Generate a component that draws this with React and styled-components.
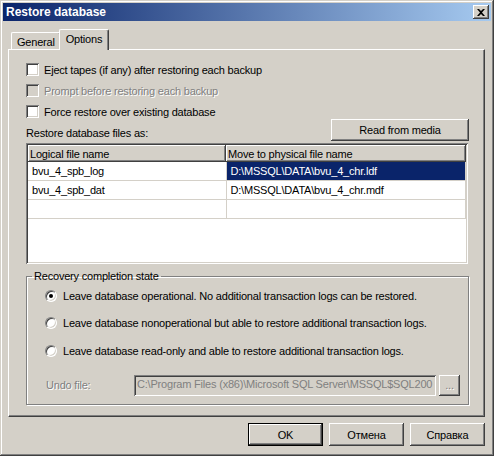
import React from 'react'
import styled, { createGlobalStyle } from 'styled-components'

const Global = createGlobalStyle`
	html, body {
		margin: 0;
		padding: 0;
		background: #d4d0c8;
	}
	body {
		font-family: "Liberation Sans", Tahoma, Arial, sans-serif;
		font-size: 11px;
		letter-spacing: -0.2px;
		color: #000;
	}
`

const raised = `
	box-shadow: inset -1px -1px #404040, inset 1px 1px #fff, inset -2px -2px #808080, inset 2px 2px #d4d0c8;
`
const sunken = `
	box-shadow: inset 1px 1px #808080, inset -1px -1px #fff, inset 2px 2px #404040, inset -2px -2px #d4d0c8;
`

const Window = styled.div`
	width: 494px;
	height: 456px;
	box-sizing: border-box;
	padding: 3px;
	background: #d4d0c8;
	box-shadow: inset -1px -1px #404040, inset 1px 1px #d4d0c8, inset -2px -2px #808080, inset 2px 2px #fff;
	display: flex;
	flex-direction: column;
`

const TitleBar = styled.div`
	height: 18px;
	display: flex;
	align-items: center;
	justify-content: space-between;
	padding: 0 2px 0 3px;
	background: linear-gradient(to right, #0a246a, #a6caf0);
	color: #fff;
	font-weight: bold;
	font-size: 12px;
	letter-spacing: 0;
`

const CloseButton = styled.div`
	width: 16px;
	height: 14px;
	background: #d4d0c8;
	${raised}
	display: flex;
	align-items: center;
	justify-content: center;
`

const Content = styled.div`
	padding: 0 6px 0 5px;
	display: flex;
	flex-direction: column;
`

const TabStrip = styled.div`
	height: 28px;
	display: flex;
	align-items: flex-end;
	padding-left: 3px;
	position: relative;
	z-index: 1;
`

const Tab = styled.div`
	box-sizing: border-box;
	height: ${(p) => (p.active ? '21px' : '17px')};
	padding: ${(p) => (p.active ? '3px 6px 0 6px' : '1px 5px 0 5px')};
	margin-left: ${(p) => (p.active ? '-2px' : '0')};
	margin-bottom: ${(p) => (p.active ? '-1px' : '0')};
	background: #d4d0c8;
	border-top: 1px solid #fff;
	border-left: 1px solid #fff;
	border-right: 1px solid #404040;
	box-shadow: inset -1px 0 #808080;
	border-radius: 2px 2px 0 0;
	display: flex;
	align-items: ${(p) => (p.active ? 'flex-start' : 'center')};
`

const Panel = styled.div`
	box-sizing: border-box;
	height: 368px;
	padding: 9px 15px 0 17px;
	border-top: 1px solid #fff;
	border-left: 1px solid #fff;
	border-right: 1px solid #404040;
	border-bottom: 1px solid #404040;
	box-shadow: inset -1px -1px #808080;
	display: flex;
	flex-direction: column;
`

const CheckRow = styled.label`
	height: 21px;
	display: flex;
	align-items: center;
	gap: 5px;
	color: ${(p) => (p.disabled ? '#808080' : '#000')};
	text-shadow: ${(p) => (p.disabled ? '1px 1px #fff' : 'none')};
`

const CheckBox = styled.span`
	width: 13px;
	height: 13px;
	flex: none;
	background: ${(p) => (p.disabled ? '#d4d0c8' : '#fff')};
	${sunken}
`

const FilesHeader = styled.div`
	height: 22px;
	margin-top: -3px;
	display: flex;
	align-items: flex-end;
	justify-content: space-between;
`

const FilesLabel = styled.span`
	padding-bottom: 2px;
`

const Button = styled.button`
	box-sizing: border-box;
	width: ${(p) => p.w || 75}px;
	height: ${(p) => p.h || 23}px;
	padding: 0;
	border: ${(p) => (p.isDefault ? '1px solid #000' : 'none')};
	background: #d4d0c8;
	${raised}
	font-family: inherit;
	font-size: 11px;
	letter-spacing: inherit;
	color: ${(p) => (p.disabled ? '#808080' : '#000')};
	text-shadow: ${(p) => (p.disabled ? '1px 1px #fff' : 'none')};
`

const Grid = styled.div`
	box-sizing: border-box;
	margin-top: 2px;
	height: 121px;
	padding: 2px;
	background: #fff;
	${sunken}
	margin-right: 1px;
`

const Table = styled.table`
	width: 100%;
	border-collapse: collapse;
	table-layout: fixed;
	font-size: 11px;
	font-family: inherit;
	letter-spacing: inherit;
`

const HeadCell = styled.th`
	box-sizing: border-box;
	height: 17px;
	padding: 0 0 0 2px;
	text-align: left;
	font-weight: normal;
	background: #d4d0c8;
	box-shadow: inset -1px -1px #404040, inset 1px 1px #fff, inset -2px -2px #808080;
	width: ${(p) => (p.w ? `${p.w}px` : 'auto')};
`

const Cell = styled.td`
	height: 18px;
	padding: 0 0 0 4px;
	border-bottom: 1px solid #d4d0c8;
	border-right: 1px solid #d4d0c8;
	background: ${(p) => (p.selected ? '#0a246a' : '#fff')};
	color: ${(p) => (p.selected ? '#fff' : '#000')};
	white-space: nowrap;
	overflow: hidden;
`

const GroupBox = styled.fieldset`
	box-sizing: border-box;
	margin: 6px 0 0 0;
	height: 135px;
	padding: 0 0 0 18px;
	border: 1px solid #808080;
	box-shadow: 1px 1px #fff, inset 1px 1px #fff;
	display: flex;
	flex-direction: column;
`

const Legend = styled.legend`
	padding: 0 2px;
	margin-left: -13px;
`

const RadioRow = styled.label`
	height: 27.5px;
	display: flex;
	align-items: center;
	gap: 6px;
`

const Radio = styled.span`
	width: 12px;
	height: 12px;
	flex: none;
	box-sizing: border-box;
	border-radius: 50%;
	background: #fff;
	border: 1px solid;
	border-color: #808080 #fff #fff #808080;
	box-shadow: inset 1px 1px #404040, inset -1px -1px #d4d0c8;
	display: flex;
	align-items: center;
	justify-content: center;
	&::after {
		content: '';
		width: 4px;
		height: 4px;
		border-radius: 50%;
		background: ${(p) => (p.checked ? '#000' : 'transparent')};
	}
`

const UndoRow = styled.div`
	margin-top: 10px;
	display: flex;
	align-items: center;
	padding-left: 1px;
`

const DisabledLabel = styled.span`
	width: 88px;
	color: #808080;
	text-shadow: 1px 1px #fff;
`

const TextField = styled.div`
	box-sizing: border-box;
	width: 302px;
	height: 21px;
	padding: 3px 0 0 3px;
	background: #d4d0c8;
	${sunken}
	color: #808080;
	white-space: nowrap;
	overflow: hidden;
`

const Browse = styled(Button)`
	margin-left: 3px;
`

const ButtonRow = styled.div`
	margin-top: 6px;
	display: flex;
	justify-content: flex-end;
	gap: 6px;
`

const checks = [
	{ text: 'Eject tapes (if any) after restoring each backup' },
	{ text: 'Prompt before restoring each backup', disabled: true },
	{ text: 'Force restore over existing database' },
]

const files = [
	{ logical: 'bvu_4_spb_log', physical: 'D:\\MSSQL\\DATA\\bvu_4_chr.ldf', selected: true },
	{ logical: 'bvu_4_spb_dat', physical: 'D:\\MSSQL\\DATA\\bvu_4_chr.mdf' },
	{ logical: '', physical: '' },
]

const options = [
	'Leave database operational. No additional transaction logs can be restored.',
	'Leave database nonoperational but able to restore additional transaction logs.',
	'Leave database read-only and able to restore additional transaction logs.',
]

export default function App() {
	return (
		<>
			<Global />
			<Window>
				<TitleBar>
					<span>Restore database</span>
					<CloseButton>
						<svg width="8" height="7" viewBox="0 0 8 7">
							<path d="M0 0h2l2 2 2-2h2L5 3.5 8 7H6L4 5 2 7H0l3-3.5z" fill="#000" />
						</svg>
					</CloseButton>
				</TitleBar>
				<Content>
					<TabStrip>
						<Tab>General</Tab>
						<Tab active>Options</Tab>
					</TabStrip>
					<Panel>
						{checks.map((c) => (
							<CheckRow key={c.text} disabled={c.disabled}>
								<CheckBox disabled={c.disabled} />
								{c.text}
							</CheckRow>
						))}
						<FilesHeader>
							<FilesLabel>Restore database files as:</FilesLabel>
							<Button w={138} h={22}>Read from media</Button>
						</FilesHeader>
						<Grid>
							<Table>
								<thead>
									<tr>
										<HeadCell w={198}>Logical file name</HeadCell>
										<HeadCell>Move to physical file name</HeadCell>
									</tr>
								</thead>
								<tbody>
									{files.map((f, i) => (
										<tr key={i}>
											<Cell>{f.logical}</Cell>
											<Cell selected={f.selected}>{f.physical}</Cell>
										</tr>
									))}
								</tbody>
							</Table>
						</Grid>
						<GroupBox>
							<Legend>Recovery completion state</Legend>
							{options.map((o, i) => (
								<RadioRow key={o}>
									<Radio checked={i === 0} />
									{o}
								</RadioRow>
							))}
							<UndoRow>
								<DisabledLabel>Undo file:</DisabledLabel>
								<TextField>C:\Program Files (x86)\Microsoft SQL Server\MSSQL$SQL200</TextField>
								<Browse w={21} h={21} disabled>...</Browse>
							</UndoRow>
						</GroupBox>
					</Panel>
					<ButtonRow>
						<Button isDefault>OK</Button>
						<Button>Отмена</Button>
						<Button>Справка</Button>
					</ButtonRow>
				</Content>
			</Window>
		</>
	)
}
